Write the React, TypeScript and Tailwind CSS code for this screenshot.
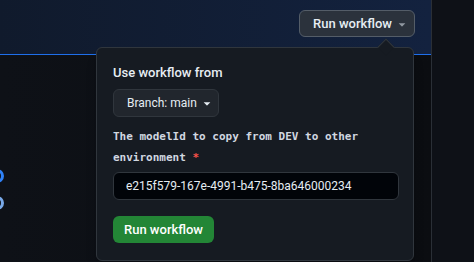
import React from 'react';

const Caret: React.FC = () => (
  <svg className="h-[14px] w-[14px] shrink-0" viewBox="0 0 16 16" fill="currentColor" aria-hidden>
    <path d="m4.427 7.427 3.396 3.396a.25.25 0 0 0 .354 0l3.396-3.396A.25.25 0 0 0 11.396 7H4.604a.25.25 0 0 0-.177.427Z" />
  </svg>
);

const App: React.FC = () => {
  return (
    <div
      className="relative flex h-[262px] w-[474px] overflow-hidden bg-[#0d1117] text-[#e6edf3]"
      style={{ fontFamily: 'Roboto, "Noto Sans", "Liberation Sans", sans-serif' }}
    >
      <main className="flex w-[432px] shrink-0 flex-col border-r border-[#2a2f36]">
        <header className="flex h-[55px] shrink-0 justify-end border-b border-[#1f6feb] bg-gradient-to-r from-[#101a2c] to-[#13223f] pt-[10px] pr-[16px]">
          <button
            type="button"
            className="flex h-[27px] w-[116px] items-center whitespace-nowrap rounded-md border border-[#545d68] bg-[#2b323c] pl-[13px] text-[13px] font-medium"
          >
            Run workflow
            <span className="ml-[3px] text-[#9198a1]">
              <Caret />
            </span>
          </button>
        </header>
        <div className="flex flex-1 bg-gradient-to-r from-[#0e1117] to-[#0b0d11]">
          <div className="-ml-[10px] mt-[114px] flex flex-col gap-[13px]">
            <span className="h-[14px] w-[14px] rounded-full border-[3px] border-[#2f81f7]" />
            <span className="h-[14px] w-[14px] rounded-full border-[3px] border-[#79a9e8]" />
          </div>
        </div>
      </main>
      <div className="flex-1 bg-[#0e1117]" />

      <div className="absolute left-[96px] top-[47px] h-[214px] w-[318px] rounded-md border border-[#30363d] bg-[#161b22] px-[16px] pt-[15px] shadow-lg">
        <span className="absolute -top-[7px] left-[283px] h-[12px] w-[12px] rotate-45 border-l border-t border-[#30363d] bg-[#161b22]" />
        <p className="text-[13px] font-medium leading-[20px]">Use workflow from</p>
        <button
          type="button"
          className="mt-[6px] flex h-[28px] w-[106px] items-center whitespace-nowrap rounded-md border border-[#30363d] bg-[#21262d] pl-[13px] text-[12px]"
        >
          Branch: main
          <span className="ml-[3px]">
            <Caret />
          </span>
        </button>
        <p
          className="mt-[9px] text-[11px] font-bold leading-[21px] text-[#d1d7e0]"
          style={{ fontFamily: '"DejaVu Sans Mono", "Liberation Mono", monospace' }}
        >
          The modelId to copy from DEV to other environment&nbsp;<span className="text-[#f85149]">*</span>
        </p>
        <input
          readOnly
          value="e215f579-167e-4991-b475-8ba646000234"
          className="mt-[4px] h-[28px] w-[286px] rounded-md border border-[#30363d] bg-[#010409] px-[12px] text-[12px] text-[#e6edf3] outline-none"
        />
        <button
          type="button"
          className="mt-[16px] flex h-[27px] w-[101px] items-center justify-center whitespace-nowrap rounded-md bg-[#238636] text-[13px] font-medium text-white"
        >
          Run workflow
        </button>
      </div>
    </div>
  );
};

export default App;
